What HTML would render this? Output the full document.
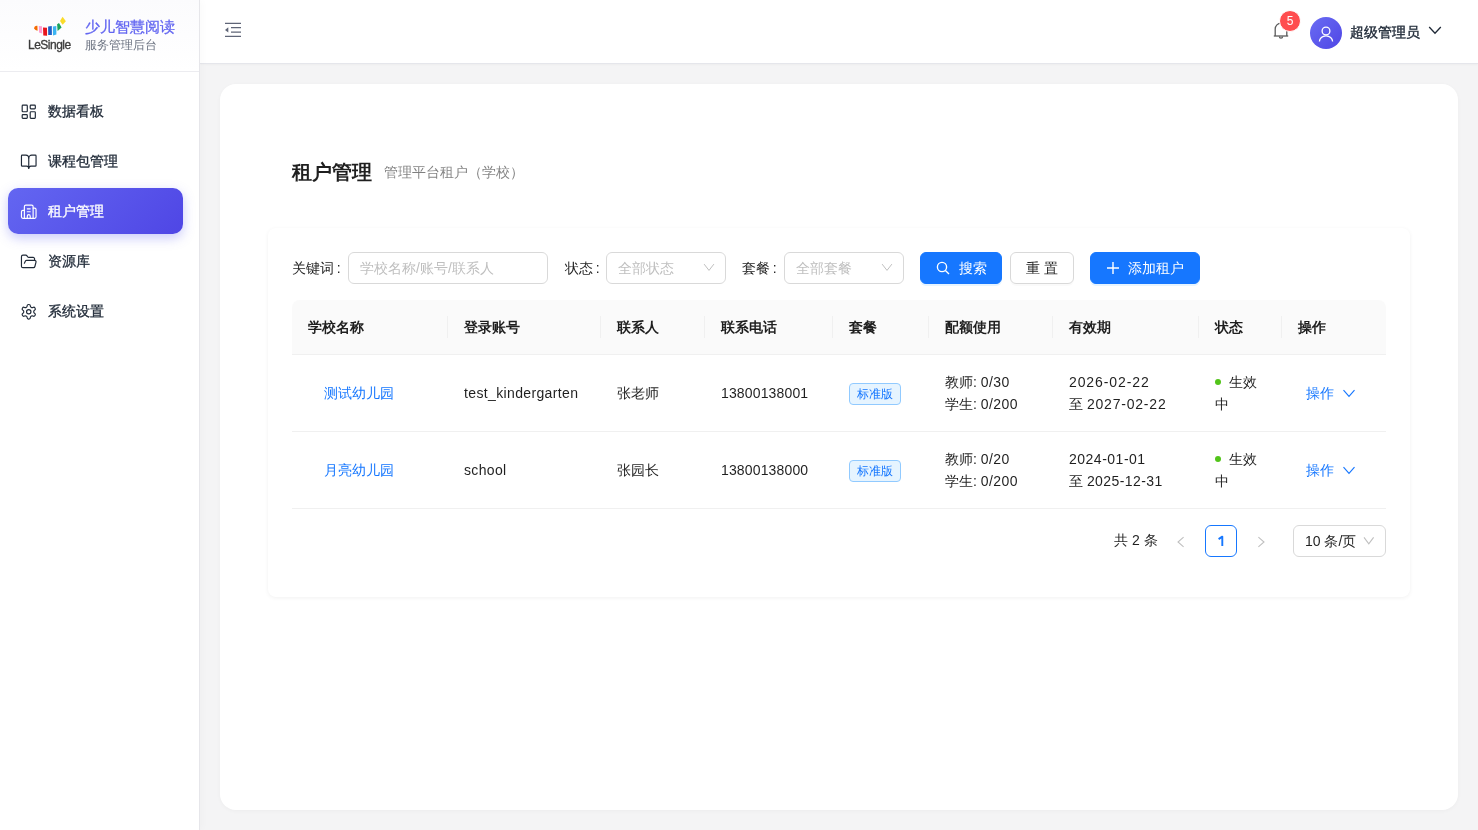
<!DOCTYPE html>
<html><head><meta charset="utf-8">
<style>
*{box-sizing:border-box;margin:0;padding:0}
html,body{width:1478px;height:830px;overflow:hidden}
body{font-family:"Liberation Sans",sans-serif;font-size:14px;color:rgba(0,0,0,.88);background:#f4f4f5;position:relative;will-change:transform}
.abs{position:absolute}
#side{position:absolute;left:0;top:0;width:200px;height:830px;background:#fff;border-right:1px solid #e6e6ea;box-shadow:2px 0 8px rgba(0,0,0,.025);z-index:2}
#logo{position:absolute;left:0;top:0;width:199px;height:72px;border-bottom:1px solid #ececf0;background:linear-gradient(180deg,#fbfbfd,#fff)}
.menu{position:absolute;left:8px;width:175px;height:46px;border-radius:10px;color:#1f2937;-webkit-text-stroke:.3px #1f2937}
.menu .ic{position:absolute;left:11.8px;top:14.6px;width:17.5px;height:17.5px}
.menu .tx{position:absolute;left:40px;top:0;line-height:46px;font-size:14px}
.menu.act{background:linear-gradient(135deg,#6366f1,#4f46e5);color:#fff;-webkit-text-stroke:.3px #fff;box-shadow:0 4px 12px rgba(99,102,241,.35)}
#hdr{position:absolute;left:200px;top:0;width:1278px;height:64px;background:#fff;border-bottom:1px solid #e5e6eb;box-shadow:0 1px 2px rgba(0,0,0,.03)}
#card{position:absolute;left:220px;top:84px;width:1238px;height:726px;background:#fff;border-radius:16px;box-shadow:0 1px 4px rgba(0,0,0,.035)}
#inner{position:absolute;left:268px;top:228px;width:1142px;height:369px;background:#fff;border-radius:8px;box-shadow:0 1px 4px rgba(0,0,0,.06)}
.lbl{position:absolute;top:252px;line-height:32px;font-size:14px;color:rgba(0,0,0,.88)}
.inp{position:absolute;top:252px;height:32px;border:1px solid #d9d9d9;border-radius:6px;background:#fff;color:#bfbfbf;line-height:30px;padding-left:11px}
.btn{position:absolute;top:252px;height:32px;border-radius:6px;line-height:30px;text-align:center;font-size:14px}
.btn.pri{background:#1677ff;color:#fff;border:1px solid #1677ff;box-shadow:0 2px 0 rgba(5,145,255,.1)}
.btn.def{background:#fff;border:1px solid #d9d9d9;color:rgba(0,0,0,.88);box-shadow:0 2px 0 rgba(0,0,0,.02)}
#thead{position:absolute;left:292px;top:300px;width:1094px;height:55px;background:#fafafa;border-radius:8px 8px 0 0;border-bottom:1px solid #f0f0f0}
.th{position:absolute;top:300px;line-height:54px;font-weight:600;color:rgba(0,0,0,.88)}
.sep{position:absolute;top:316px;width:1px;height:22px;background:#f0f0f0}
.rowb{position:absolute;left:292px;width:1094px;height:1px;background:#f0f0f0}
.td{position:absolute;line-height:22px}
.tag{position:absolute;height:22px;line-height:20px;padding:0 7px;font-size:12px;color:#1677ff;background:#e6f4ff;border:1px solid #91caff;border-radius:4px}
.link{color:#1677ff}
.dot{position:absolute;width:6px;height:6px;border-radius:3px;background:#52c41a}
</style></head><body><div id="side">
  <div id="logo">
    <svg class="abs" style="left:30px;top:14px" width="40" height="24" viewBox="30 14 40 24">
      <path d="M34.6 26.8 Q35.6 25.6 37.4 25.8 L37.6 30.8 Q35.2 30.4 34 28.4 Z" fill="#f56a00"/>
      <path d="M38.8 26 L42 26.3 L42.2 33.5 L39 32.6 Z" fill="#ff9ed2"/>
      <path d="M43 27.6 L47 27.8 L47.1 35.8 L43.3 35.4 Z" fill="#e8141c"/>
      <path d="M48.1 26.4 L51.8 26 L51.9 35 L48.2 35.1 Z" fill="#1f5fc4"/>
      <path d="M52.9 26.5 L56.3 26 L56.4 34.6 L53 35.4 Z" fill="#3bb4f2"/>
      <path d="M57.1 24.3 L59 23 L61.6 27.6 L57.6 31 Z" fill="#1aa35a"/>
      <path d="M62.6 16.8 L65.9 21.2 L62.6 24.7 L60 21 Z" fill="#fadb2a"/>
    </svg>
    <div class="abs" style="left:28px;top:38.3px;font-size:12px;letter-spacing:-0.5px;color:#3c3c3c;-webkit-text-stroke:.3px #3c3c3c;line-height:14px">LeSingle</div>
    <div class="abs" style="left:85px;top:16px;font-size:15px;color:#6366f1;-webkit-text-stroke:.3px #6366f1;line-height:22px">少儿智慧阅读</div>
    <div class="abs" style="left:85px;top:36.5px;font-size:12px;color:#6b7280;line-height:17px">服务管理后台</div>
  </div>
  <div class="menu" style="top:88px">
    <svg class="ic" viewBox="0 0 24 24" fill="none" stroke="#1f2937" stroke-width="1.6" stroke-linecap="round" stroke-linejoin="round"><rect x="3" y="3" width="7" height="9" rx="1"/><rect x="14" y="3" width="7" height="5" rx="1"/><rect x="14" y="12" width="7" height="9" rx="1"/><rect x="3" y="16" width="7" height="5" rx="1"/></svg>
    <span class="tx">数据看板</span></div>
  <div class="menu" style="top:138px">
    <svg class="ic" viewBox="0 0 24 24" fill="none" stroke="#1f2937" stroke-width="1.6" stroke-linecap="round" stroke-linejoin="round"><path d="M12 7v14"/><path d="M3 18a1 1 0 0 1-1-1V4a1 1 0 0 1 1-1h5a4 4 0 0 1 4 4 4 4 0 0 1 4-4h5a1 1 0 0 1 1 1v13a1 1 0 0 1-1 1h-6a3 3 0 0 0-3 3 3 3 0 0 0-3-3z"/></svg>
    <span class="tx">课程包管理</span></div>
  <div class="menu act" style="top:188px">
    <svg class="ic" viewBox="0 0 24 24" fill="none" stroke="#fff" stroke-width="1.6" stroke-linecap="round" stroke-linejoin="round"><path d="M10 12h4"/><path d="M10 8h4"/><path d="M14 21v-3a2 2 0 0 0-4 0v3"/><path d="M6 10H4a2 2 0 0 0-2 2v7a2 2 0 0 0 2 2h16a2 2 0 0 0 2-2V9a2 2 0 0 0-2-2h-2"/><path d="M6 21V5a2 2 0 0 1 2-2h8a2 2 0 0 1 2 2v16"/></svg>
    <span class="tx">租户管理</span></div>
  <div class="menu" style="top:238px">
    <svg class="ic" viewBox="0 0 24 24" fill="none" stroke="#1f2937" stroke-width="1.6" stroke-linecap="round" stroke-linejoin="round"><path d="m6 14 1.5-2.9A2 2 0 0 1 9.24 10H20a2 2 0 0 1 1.94 2.5l-1.54 6a2 2 0 0 1-1.95 1.5H4a2 2 0 0 1-2-2V5a2 2 0 0 1 2-2h3.9a2 2 0 0 1 1.69.9l.81 1.2a2 2 0 0 0 1.67.9H18a2 2 0 0 1 2 2v2"/></svg>
    <span class="tx">资源库</span></div>
  <div class="menu" style="top:288px">
    <svg class="ic" viewBox="0 0 24 24" fill="none" stroke="#1f2937" stroke-width="1.6" stroke-linecap="round" stroke-linejoin="round"><path d="M12.22 2h-.44a2 2 0 0 0-2 2v.18a2 2 0 0 1-1 1.73l-.43.25a2 2 0 0 1-2 0l-.15-.08a2 2 0 0 0-2.73.73l-.22.38a2 2 0 0 0 .73 2.73l.15.1a2 2 0 0 1 1 1.72v.51a2 2 0 0 1-1 1.74l-.15.09a2 2 0 0 0-.73 2.73l.22.38a2 2 0 0 0 2.73.73l.15-.08a2 2 0 0 1 2 0l.43.25a2 2 0 0 1 1 1.73V20a2 2 0 0 0 2 2h.44a2 2 0 0 0 2-2v-.18a2 2 0 0 1 1-1.73l.43-.25a2 2 0 0 1 2 0l.15.08a2 2 0 0 0 2.73-.73l.22-.39a2 2 0 0 0-.73-2.73l-.15-.08a2 2 0 0 1-1-1.74v-.5a2 2 0 0 1 1-1.74l.15-.09a2 2 0 0 0 .73-2.73l-.22-.38a2 2 0 0 0-2.73-.73l-.15.08a2 2 0 0 1-2 0l-.43-.25a2 2 0 0 1-1-1.73V4a2 2 0 0 0-2-2z"/><circle cx="12" cy="12" r="3"/></svg>
    <span class="tx">系统设置</span></div>
</div>
<div id="hdr">
  <svg class="abs" style="left:24px;top:22px" width="17" height="16" viewBox="0 0 17 16">
    <path d="M1 1.4h16M7 5.7h10M7 10.1h10M1 14.3h16" stroke="#5f6577" stroke-width="1.2"/>
    <path d="M1 7.9 L4.3 5.2 V10.6 Z" fill="#5f6577"/>
  </svg>
</div>
<!-- bell -->
<svg class="abs" style="left:1272px;top:20px" width="18" height="20" viewBox="0 0 18 20" fill="none" stroke="#5c5c5c" stroke-width="1.3">
  <path d="M3.2 16 V9 a5.8 5.8 0 0 1 11.6 0 V16"/><path d="M1.8 16 H16.2"/><path d="M7.4 16.6 a1.6 1.6 0 0 0 3.2 0"/>
</svg>
<div class="abs" style="left:1279px;top:10px;width:22px;height:22px;border-radius:11px;background:#ff4d4f;border:1px solid #fff;color:#fff;font-size:12px;line-height:20px;text-align:center">5</div>
<div class="abs" style="left:1310px;top:17px;width:32px;height:32px;border-radius:16px;background:linear-gradient(135deg,#6a6cf3,#4f46e5)">
  <svg class="abs" style="left:0;top:0" width="32" height="32" viewBox="0 0 32 32" fill="none" stroke="#fff" stroke-width="1.3"><circle cx="16" cy="14" r="3.9"/><path d="M9.4 24.6 A6.6 5.8 0 0 1 22.6 24.6"/></svg>
</div>
<div class="abs" style="left:1350px;top:21px;font-size:14px;color:#1f2937;-webkit-text-stroke:.38px #1f2937;line-height:22px">超级管理员</div>
<svg class="abs" style="left:1428px;top:25px" width="14" height="11" viewBox="0 0 14 11" fill="none" stroke="#1f2937" stroke-width="1.3"><path d="M1.2 2 L7 8.2 L12.8 2"/></svg>

<div id="card"></div>
<div class="abs" style="left:292px;top:158px;font-size:20px;font-weight:600;line-height:28px;color:rgba(0,0,0,.88)">租户管理</div>
<div class="abs" style="left:384px;top:161px;font-size:14px;line-height:22px;color:rgba(0,0,0,.5)">管理平台租户（学校）</div>
<div id="inner"></div>

<div class="lbl" style="left:292px">关键词&thinsp;:</div>
<div class="inp" style="left:348px;width:200px">学校名称/账号/联系人</div>
<div class="lbl" style="left:565px">状态&thinsp;:</div>
<div class="inp" style="left:606px;width:120px">全部状态</div>
<svg class="abs" style="left:703px;top:263px" width="12" height="10" viewBox="0 0 12 10" fill="none" stroke="#bfbfbf" stroke-width="1"><path d="M1.1 1.1 L6 7.4 L10.9 1.1"/></svg>
<div class="lbl" style="left:742px">套餐&thinsp;:</div>
<div class="inp" style="left:784px;width:120px">全部套餐</div>
<svg class="abs" style="left:881px;top:263px" width="12" height="10" viewBox="0 0 12 10" fill="none" stroke="#bfbfbf" stroke-width="1"><path d="M1.1 1.1 L6 7.4 L10.9 1.1"/></svg>
<div class="btn pri" style="left:920px;width:82px"><svg style="position:absolute;left:15px;top:8px" width="14" height="14" viewBox="0 0 14 14" fill="none" stroke="#fff" stroke-width="1.35"><circle cx="6" cy="6" r="4.6"/><path d="M9.4 9.4 L13 13"/></svg><span style="position:absolute;left:38px;top:.3px">搜索</span></div>
<div class="btn def" style="left:1010px;width:64px">重 置</div>
<div class="btn pri" style="left:1090px;width:110px"><svg style="position:absolute;left:15px;top:8px" width="14" height="14" viewBox="0 0 14 14" fill="none" stroke="#fff" stroke-width="1.4"><path d="M7 1 V13 M1 7 H13"/></svg><span style="position:absolute;left:37px">添加租户</span></div>

<div id="thead"></div>
<div class="th" style="left:308px">学校名称</div>
<div class="sep" style="left:447px"></div>
<div class="th" style="left:464px">登录账号</div>
<div class="sep" style="left:600px"></div>
<div class="th" style="left:617px">联系人</div>
<div class="sep" style="left:704px"></div>
<div class="th" style="left:721px">联系电话</div>
<div class="sep" style="left:832px"></div>
<div class="th" style="left:849px">套餐</div>
<div class="sep" style="left:928px"></div>
<div class="th" style="left:945px">配额使用</div>
<div class="sep" style="left:1052px"></div>
<div class="th" style="left:1069px">有效期</div>
<div class="sep" style="left:1198px"></div>
<div class="th" style="left:1215px">状态</div>
<div class="sep" style="left:1281px"></div>
<div class="th" style="left:1298px">操作</div>

<div class="rowb" style="top:431px"></div>
<div class="rowb" style="top:508px"></div>

<div class="td link" style="left:324px;top:382px">测试幼儿园</div>
<div class="td" style="left:464px;top:382px;letter-spacing:.36px">test_kindergarten</div>
<div class="td" style="left:617px;top:382px">张老师</div>
<div class="td" style="left:721px;top:382px;letter-spacing:.15px">13800138001</div>
<div class="tag" style="left:849px;top:383px">标准版</div>
<div class="td" style="left:945px;top:370.5px">教师: <span style="letter-spacing:.45px">0/30</span><br>学生: <span style="letter-spacing:.45px">0/200</span></div>
<div class="td" style="left:1069px;top:371px"><span style="letter-spacing:.9px">2026-02-22</span><br>至 <span style="letter-spacing:.8px">2027-02-22</span></div>
<div class="dot" style="left:1215px;top:379px"></div>
<div class="td" style="left:1215px;top:371px"><span style="padding-left:14px">生效</span><br>中</div>
<div class="td link" style="left:1306px;top:382px">操作</div>
<svg class="abs" style="left:1342px;top:387.5px" width="14" height="10" viewBox="0 0 14 10" fill="none" stroke="#1677ff" stroke-width="1.15"><path d="M1.5 2.2 L7 8.4 L12.5 2.2"/></svg>

<div class="td link" style="left:324px;top:459px">月亮幼儿园</div>
<div class="td" style="left:464px;top:459px;letter-spacing:.34px">school</div>
<div class="td" style="left:617px;top:459px">张园长</div>
<div class="td" style="left:721px;top:459px;letter-spacing:.15px">13800138000</div>
<div class="tag" style="left:849px;top:460px">标准版</div>
<div class="td" style="left:945px;top:447.5px">教师: <span style="letter-spacing:.45px">0/20</span><br>学生: <span style="letter-spacing:.45px">0/200</span></div>
<div class="td" style="left:1069px;top:448px"><span style="letter-spacing:.5px">2024-01-01</span><br>至 <span style="letter-spacing:.42px">2025-12-31</span></div>
<div class="dot" style="left:1215px;top:456px"></div>
<div class="td" style="left:1215px;top:448px"><span style="padding-left:14px">生效</span><br>中</div>
<div class="td link" style="left:1306px;top:459px">操作</div>
<svg class="abs" style="left:1342px;top:464.5px" width="14" height="10" viewBox="0 0 14 10" fill="none" stroke="#1677ff" stroke-width="1.15"><path d="M1.5 2.2 L7 8.4 L12.5 2.2"/></svg>

<div class="td" style="left:1114px;top:528.5px">共 2 条</div>
<svg class="abs" style="left:1176px;top:536px" width="10" height="12" viewBox="0 0 10 12" fill="none" stroke="#bfbfbf" stroke-width="1.05"><path d="M7.6 1.2 L2 6 L7.6 10.8"/></svg>
<div class="abs" style="left:1205px;top:525px;width:32px;height:32px;border:1px solid #1677ff;border-radius:6px"></div><svg class="abs" style="left:1214px;top:533px" width="14" height="16" viewBox="0 0 14 16" fill="none" stroke="#1677ff" stroke-width="1.9" stroke-linejoin="round"><path d="M8.3 13 V3.6 L4.6 6.1"/></svg>
<svg class="abs" style="left:1256px;top:535.5px" width="10" height="12" viewBox="0 0 10 12" fill="none" stroke="#bfbfbf" stroke-width="1.05"><path d="M2.4 1.2 L8 6 L2.4 10.8"/></svg>
<div class="inp" style="left:1293px;top:525px;width:93px;color:rgba(0,0,0,.88)">10 条/页</div>
<svg class="abs" style="left:1363px;top:536px" width="12" height="10" viewBox="0 0 12 10" fill="none" stroke="#bfbfbf" stroke-width="1.1"><path d="M1 1.3 L5.8 7.8 L10.6 1.3"/></svg>
</body></html>
